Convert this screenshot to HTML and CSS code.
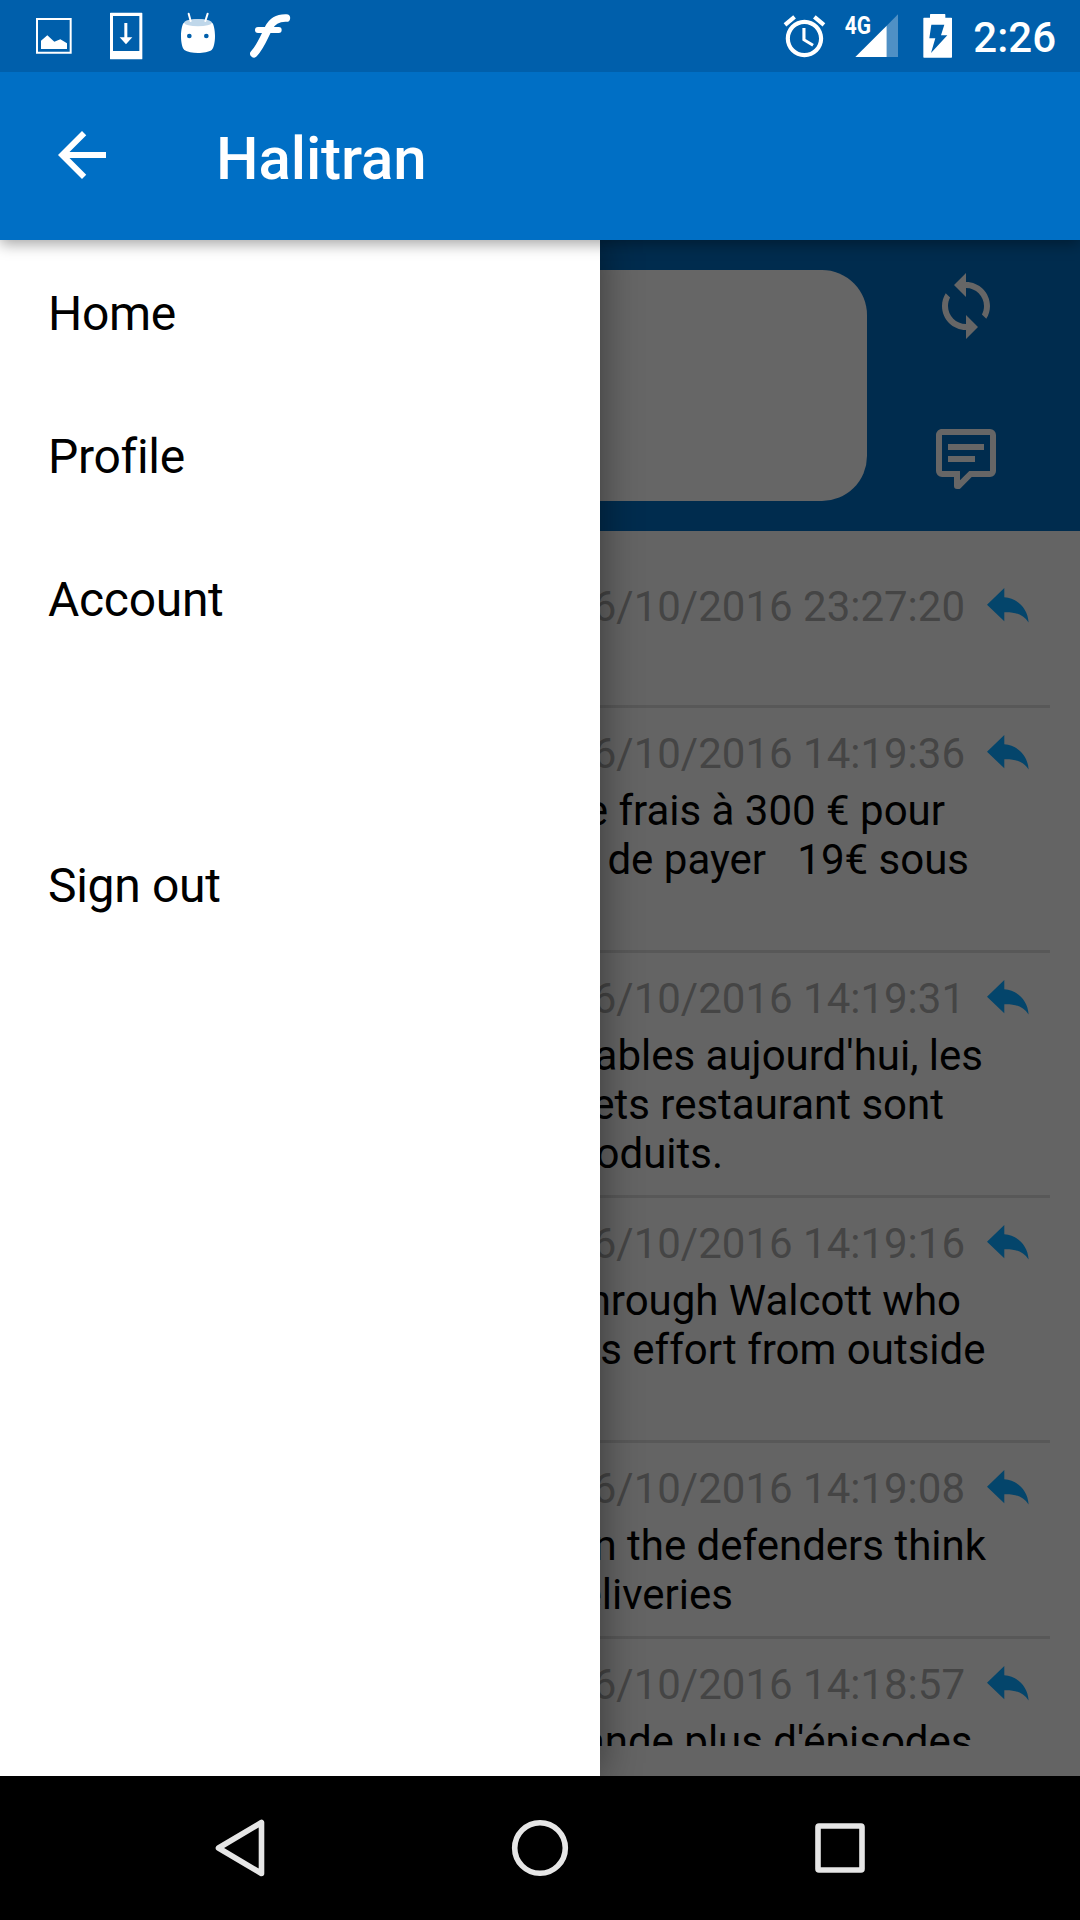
FILE: index.html
```html
<!DOCTYPE html>
<html lang="en">
<head>
<meta charset="utf-8">
<title>Halitran</title>
<link rel="stylesheet" href="styles.css">
</head>
<body>
<svg class="defs" width="0" height="0" aria-hidden="true">
  <symbol id="reply" viewBox="0 0 42 35"><path d="M0 16.7 17.3 0V9.3C30 10.2 40.7 20 41.6 34.4 36 26 27.5 23.8 17.3 24.2V33.3Z"/></symbol>
</svg>
<header class="status-bar">
  <div class="notifications">
    <svg width="90" height="72" viewBox="0 0 270 216"><path d="M111 57H212V158H111Z" fill="none" stroke="#fff" stroke-width="6"/><path d="M123 122 142 106 163 125 181 118 201 130V147H123Z" fill="#fff"/></svg>
    <svg width="70" height="72" viewBox="270 0 210 216"><path fill="#fff" fill-rule="evenodd" d="M332 38H425Q427 38 427 40V176Q427 178 425 178H332Q330 178 330 176V40Q330 38 332 38ZM339 48V153H418V48ZM373 69H382V112H397L378 133 359 112H373Z"/></svg>
    <svg width="80" height="72" viewBox="480 0 240 216"><path fill="#fff" d="M552 68C570 54 618 54 636 68 641 70 645 90 645 108 645 128 641 144 635 150 618 162 570 162 553 150 547 144 543 128 543 108 543 90 547 70 552 68Z"/><ellipse cx="594" cy="68" rx="41" ry="11" fill="#bfd7ea"/><path d="M566 41 572 63M623 41 616 63" stroke="#fff" stroke-width="6" stroke-linecap="round"/><circle cx="568" cy="108" r="7" fill="#005fab"/><circle cx="619" cy="108" r="7" fill="#005fab"/></svg>
    <svg width="60" height="72" viewBox="720 0 180 216" fill="none" stroke="#fff" stroke-linecap="round"><path d="M762 161C782 140 792 112 806 84 816 64 832 53 859 54" stroke-width="23"/><path d="M774 90H836" stroke-width="18"/></svg>
  </div>
  <div class="system">
    <svg width="80" height="72" viewBox="0 0 80 72"><g transform="translate(19.5 11.4) scale(2.08)"><path fill="#fff" d="M22 5.72l-4.6-3.86-1.29 1.53 4.6 3.86L22 5.72zM7.88 3.39L6.6 1.86 2 5.71l1.29 1.53 4.59-3.85zM12.5 8H11v6l4.75 2.85.75-1.23-4-2.37V8zM12 4c-4.97 0-9 4.03-9 9s4.02 9 9 9c4.97 0 9-4.03 9-9s-4.03-9-9-9zm0 16c-3.87 0-7-3.13-7-7s3.13-7 7-7 7 3.13 7 7-3.13 7-7 7z"/></g></svg>
    <svg width="70" height="72" viewBox="240 0 210 216"><text class="network" x="254" y="101" textLength="79" lengthAdjust="spacingAndGlyphs">4G</text><path fill="#4f90c5" d="M380 77 414 43V171H380Z"/><path fill="#fff" d="M286 171 380 77V171Z"/></svg>
    <svg width="50" height="72" viewBox="450 0 150 216"><path fill="#fff" fill-rule="evenodd" d="M490 55Q490 53 492 53H510V44Q510 42 512 42H554Q556 42 556 44V53H574Q576 53 576 55V171Q576 173 574 173H492Q490 173 490 171ZM514 74 508 115H526L513 159 562 106H543L553 74Z"/></svg>
    <span class="clock">2:26</span>
  </div>
</header>
<div class="toolbar">
  <svg width="72" height="72" viewBox="0 0 24 24"><path fill="#fff" d="M20 11H7.83l5.59-5.59L12 4l-8 8 8 8 1.41-1.41L7.83 13H20v-2z"/></svg>
  <h1 class="title">Halitran</h1>
</div>
<div class="stage">
  <nav class="drawer">
    <a class="item">Home</a>
    <a class="item">Profile</a>
    <a class="item">Account</a>
    <a class="item" aria-hidden="true"></a>
    <a class="item">Sign out</a>
  </nav>
  <main class="content">
    <section class="composer">
      <div class="field"></div>
      <div class="actions">
        <svg width="72" height="72" viewBox="0 0 24 24"><path d="M12 4V1L8 5l4 4V6c3.31 0 6 2.69 6 6 0 1.01-.25 1.97-.7 2.8l1.46 1.46C19.54 15.03 20 13.57 20 12c0-4.42-3.58-8-8-8zm0 14c-3.31 0-6-2.69-6-6 0-1.01.25-1.97.7-2.8L5.24 7.74C4.46 8.97 4 10.43 4 12c0 4.42 3.58 8 8 8v3l4-4-4-4v3z"/></svg>
        <svg width="72" height="72" viewBox="0 0 24 24"><path d="M9,22A1,1 0 0,1 8,21V18H4A2,2 0 0,1 2,16V4C2,2.89 2.9,2 4,2H20A2,2 0 0,1 22,4V16A2,2 0 0,1 20,18H13.9L10.2,21.71C10,21.9 9.75,22 9.5,22H9M10,16V19.08L13.08,16H20V4H4V16H10M6,7H18V9H6V7M6,11H15V13H6V11Z"/></svg>
      </div>
    </section>
    <section class="messages">
      <article class="message short">
        <div class="meta"><time>6/10/2016 23:27:20</time><svg width="42" height="35"><use href="#reply"/></svg></div>
      </article>
      <article class="message">
        <div class="meta"><time>6/10/2016 14:19:36</time><svg width="42" height="35"><use href="#reply"/></svg></div>
        <p class="line" style="--end:105px">e frais à 300 € pour</p>
        <p class="line" style="--end:81px">de payer&nbsp;&nbsp; 19€ sous</p>
      </article>
      <article class="message">
        <div class="meta"><time>6/10/2016 14:19:31</time><svg width="42" height="35"><use href="#reply"/></svg></div>
        <p class="line" style="--end:67px">ables aujourd'hui, les</p>
        <p class="line" style="--end:106px">ets restaurant sont</p>
        <p class="line" style="--end:327px">oduits.</p>
      </article>
      <article class="message">
        <div class="meta"><time>6/10/2016 14:19:16</time><svg width="42" height="35"><use href="#reply"/></svg></div>
        <p class="line" style="--end:89px">hrough Walcott who</p>
        <p class="line" style="--end:64.5px">s effort from outside</p>
      </article>
      <article class="message medium">
        <div class="meta"><time>6/10/2016 14:19:08</time><svg width="42" height="35"><use href="#reply"/></svg></div>
        <p class="line" style="--end:64px">n the defenders think</p>
        <p class="line" style="--end:317px">eliveries</p>
      </article>
      <article class="message">
        <div class="meta"><time>6/10/2016 14:18:57</time><svg width="42" height="35"><use href="#reply"/></svg></div>
        <p class="line" style="--end:77.5px">ande plus d'épisodes</p>
      </article>
    </section>
  </main>
</div>
<footer class="nav-bar">
  <svg width="60" height="60" viewBox="0 0 60 60"><path d="M51.5 4.5V55.5L8.5 30Z"/></svg>
  <svg width="60" height="60" viewBox="0 0 60 60"><circle cx="30" cy="30" r="25.3"/></svg>
  <svg width="60" height="60" viewBox="0 0 60 60"><rect x="8" y="8" width="44" height="44" rx="1"/></svg>
</footer>
</body>
</html>
```
FILE: styles.css
```css
* { box-sizing: border-box; }
body {
  margin: 0;
  width: 1080px;
  height: 1920px;
  overflow: hidden;
  display: flex;
  flex-direction: column;
  font-family: Roboto, "Liberation Sans", sans-serif;
  background: #646464;
}
svg { display: block; flex: none; }
.defs { position: absolute; }
h1, p { margin: 0; }

.status-bar {
  flex: none;
  height: 72px;
  display: flex;
  justify-content: space-between;
  background: #005fab;
  color: #fff;
  z-index: 3;
}
.notifications, .system { display: flex; }
.network { font: 700 77px Roboto, sans-serif; fill: #fff; }
.clock {
  width: 120px;
  padding-right: 24px;
  text-align: right;
  font-size: 42px;
  font-weight: 500;
  line-height: 75px;
}

.toolbar {
  flex: none;
  height: 168px;
  padding: 0 46px 2px;
  display: flex;
  align-items: center;
  gap: 98px;
  background: #006fc5;
  color: #fff;
  box-shadow: 0 4px 14px rgba(0, 0, 0, .36);
  z-index: 2;
}
.title {
  font-size: 60px;
  font-weight: 500;
  line-height: 72px;
  letter-spacing: -.1px;
  padding-top: 8px;
}

.stage {
  height: 1536px;
  display: flex;
}
.drawer {
  flex: none;
  width: 600px;
  padding-top: 2px;
  background: #fff;
  box-shadow: 0 0 38px rgba(0, 0, 0, .45);
  z-index: 1;
}
.item {
  display: block;
  height: 143px;
  padding-left: 48px;
  font-size: 48px;
  line-height: 143px;
  letter-spacing: -.3px;
  font-variant-ligatures: common-ligatures;
  color: #000;
}

.content {
  width: 480px;
  display: flex;
  flex-direction: column;
}
.composer {
  flex: none;
  height: 291px;
  padding: 30px 78px 30px 0;
  display: flex;
  justify-content: space-between;
  background: #002c4e;
}
.field {
  width: 267px;
  height: 231px;
  border-radius: 0 45px 45px 0;
  background: #666;
}
.actions {
  display: flex;
  flex-direction: column;
  gap: 81px;
  fill: #666;
}
/* The list runs on under the open drawer. */
.messages {
  height: 1185px;
  margin: 30px 30px 30px -40px;
  overflow: hidden;
}
.message {
  height: 245px;
  padding-top: 21px;
  border-bottom: 3px solid #585858;
}
.message.short { height: 147px; }
.message.medium { height: 196px; }
.meta {
  display: flex;
  justify-content: flex-end;
  gap: 22px;
  height: 57px;
  padding-right: 21px;
  font-size: 42px;
  line-height: 49px;
  color: #454545;
}
.meta svg { margin-top: 6px; fill: #04456b; }
.line {
  font-size: 42px;
  line-height: 49px;
  text-align: right;
  white-space: nowrap;
  padding-right: var(--end);
  color: #000;
}

.nav-bar {
  flex: none;
  height: 144px;
  padding: 0 210px;
  display: flex;
  justify-content: space-between;
  align-items: center;
  background: #000;
  z-index: 3;
}
.nav-bar svg {
  fill: none;
  stroke: #e6e6e6;
  stroke-width: 5.6;
  stroke-linejoin: round;
}
```
